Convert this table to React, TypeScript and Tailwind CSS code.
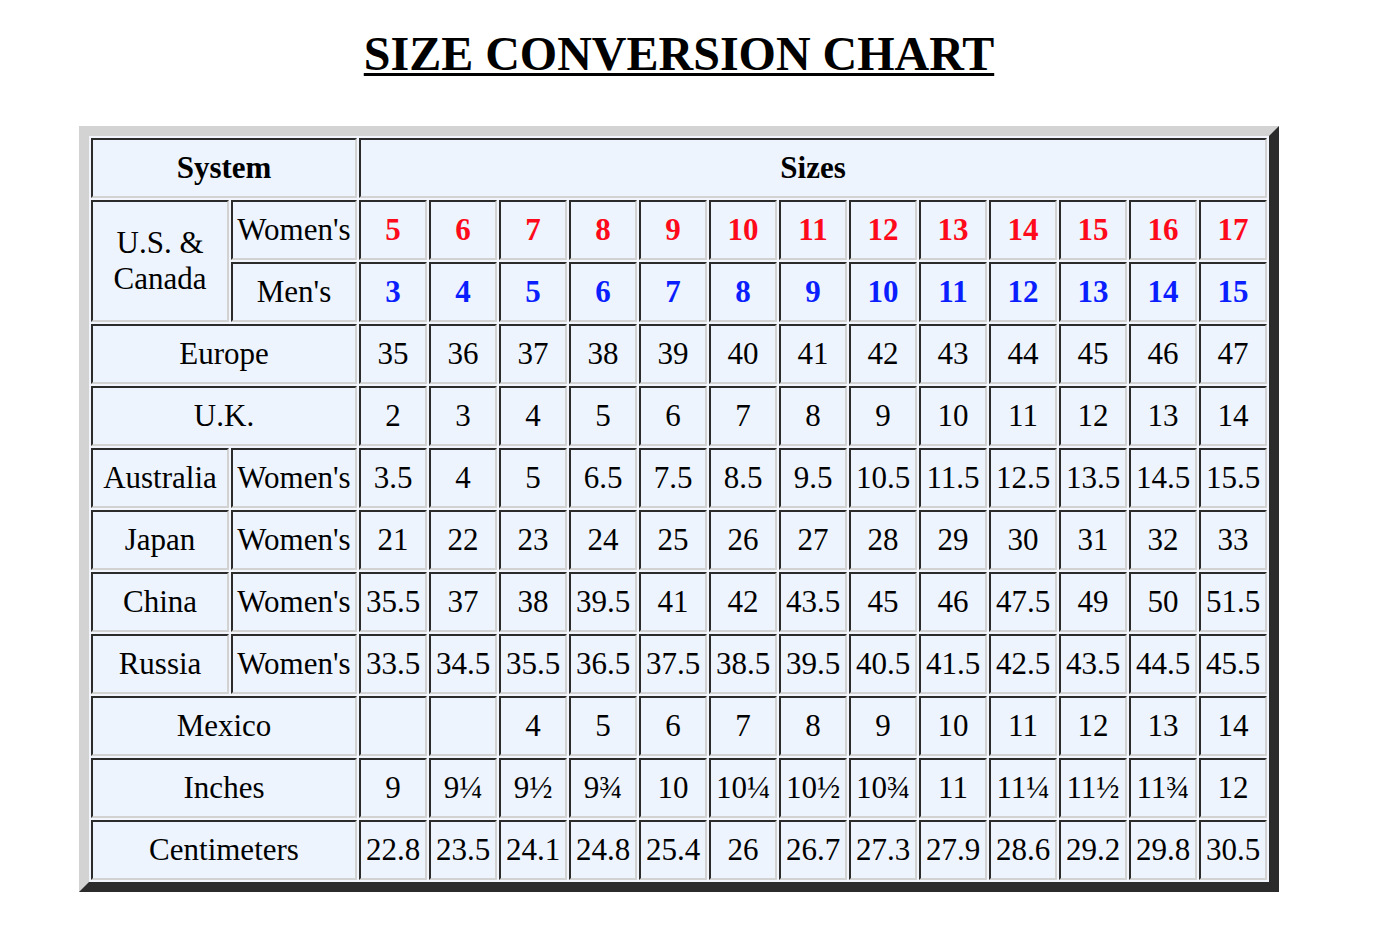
import React from "react";

const women = ["5","6","7","8","9","10","11","12","13","14","15","16","17"];
const men = ["3","4","5","6","7","8","9","10","11","12","13","14","15"];

type Row = { label: string; sub?: string; vals: string[] };
const rows: Row[] = [
  { label: "Europe", vals: ["35","36","37","38","39","40","41","42","43","44","45","46","47"] },
  { label: "U.K.", vals: ["2","3","4","5","6","7","8","9","10","11","12","13","14"] },
  { label: "Australia", sub: "Women's", vals: ["3.5","4","5","6.5","7.5","8.5","9.5","10.5","11.5","12.5","13.5","14.5","15.5"] },
  { label: "Japan", sub: "Women's", vals: ["21","22","23","24","25","26","27","28","29","30","31","32","33"] },
  { label: "China", sub: "Women's", vals: ["35.5","37","38","39.5","41","42","43.5","45","46","47.5","49","50","51.5"] },
  { label: "Russia", sub: "Women's", vals: ["33.5","34.5","35.5","36.5","37.5","38.5","39.5","40.5","41.5","42.5","43.5","44.5","45.5"] },
  { label: "Mexico", vals: ["","","4","5","6","7","8","9","10","11","12","13","14"] },
  { label: "Inches", vals: ["9","9¼","9½","9¾","10","10¼","10½","10¾","11","11¼","11½","11¾","12"] },
  { label: "Centimeters", vals: ["22.8","23.5","24.1","24.8","25.4","26","26.7","27.3","27.9","28.6","29.2","29.8","30.5"] },
];

const cell =
  "flex items-center justify-center text-center bg-[#edf4fe] border-2 border-t-[#2b2b2b] border-l-[#2b2b2b] border-b-[#d2d2d2] border-r-[#d2d2d2] leading-[1.15]";

export default function App() {
  return (
    <div
      className="w-[1358px] bg-white flex flex-col items-center text-black"
      style={{ fontFamily: '"Liberation Serif", "Times New Roman", serif' }}
    >
      <h1 className="mt-[27px] text-[48px] font-bold underline underline-offset-[3px] decoration-[3px] leading-[53px] h-[53px]">
        SIZE CONVERSION CHART
      </h1>
      <div className="mt-[46px] w-[1200px] border-[10px] border-t-[#d3d3d3] border-l-[#d3d3d3] border-b-[#2b2b2b] border-r-[#2b2b2b] bg-[#f2f6fc] p-[2px] grid grid-cols-[138px_126px_repeat(13,68px)] auto-rows-[60px] gap-[2px] text-[31px]">
        <div className={`${cell} col-span-2 font-bold`}>System</div>
        <div className={`${cell} col-span-13 font-bold`}>Sizes</div>

        <div className={`${cell} row-span-2`}>U.S. &amp;<br />Canada</div>
        <div className={cell}>Women's</div>
        {women.map((v, i) => (
          <div key={"w" + i} className={`${cell} font-bold text-[#ff0a1a]`}>{v}</div>
        ))}
        <div className={cell}>Men's</div>
        {men.map((v, i) => (
          <div key={"m" + i} className={`${cell} font-bold text-[#0a1eff]`}>{v}</div>
        ))}

        {rows.map((r) => (
          <React.Fragment key={r.label}>
            {r.sub ? (
              <>
                <div className={cell}>{r.label}</div>
                <div className={cell}>{r.sub}</div>
              </>
            ) : (
              <div className={`${cell} col-span-2`}>{r.label}</div>
            )}
            {r.vals.map((v, i) => (
              <div key={r.label + i} className={cell}>{v}</div>
            ))}
          </React.Fragment>
        ))}
      </div>
    </div>
  );
}
